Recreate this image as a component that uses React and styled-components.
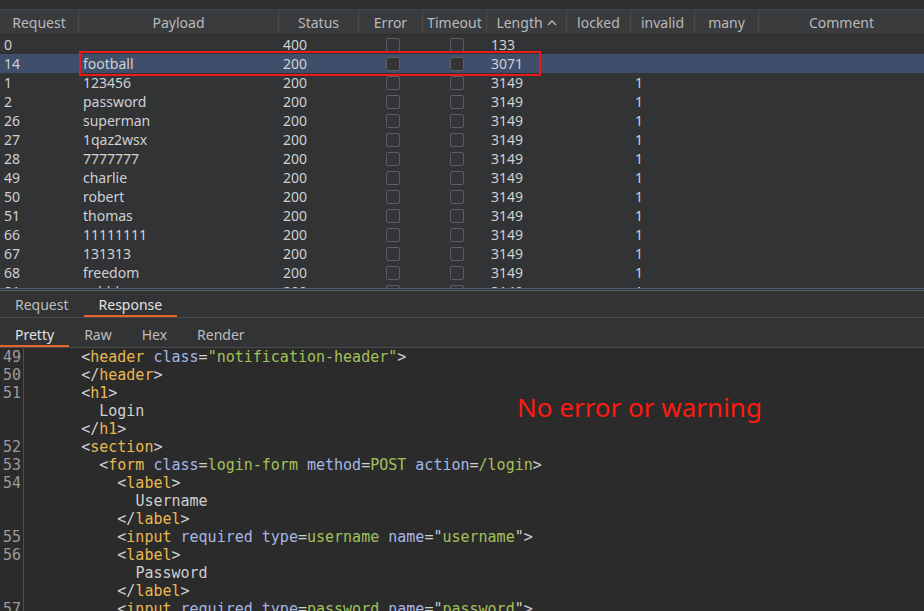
import React from 'react';
import styled, { createGlobalStyle } from 'styled-components';

const GlobalStyle = createGlobalStyle`
    html, body {
        margin: 0;
        padding: 0;
        background: #2b2b2b;
        overflow: hidden;
    }
`;

const Page = styled.div`
    width: 924px;
    height: 611px;
    display: flex;
    flex-direction: column;
    overflow: hidden;
    position: relative;
    background: #2b2b2b;
    font-family: 'Noto Sans', 'Open Sans', sans-serif;
`;

const TopStrip = styled.div`
    height: 9px;
    flex: none;
    background: #2f3032;
    border-bottom: 1px solid #3e4552;
`;

const TablePane = styled.div`
    height: 278px;
    flex: none;
    overflow: hidden;
    background: #323335;
    border-bottom: 1px solid #4b5a7d;
`;

const COLS = '79px 200px 80px 64px 64px 80px 64px 64px 64px 1fr';

const HeaderRow = styled.div`
    display: grid;
    grid-template-columns: ${COLS};
    height: 25px;
    background: #3a3b3d;
    border-bottom: 1px solid #2a2b2d;
    box-sizing: border-box;
`;

const HeadCell = styled.div`
    display: flex;
    align-items: center;
    justify-content: center;
    gap: 4px;
    font-size: 14px;
    color: #b8b9bb;
    border-right: 1px solid #4b4c4e;
    &:last-child {
        border-right: none;
    }
`;

const Row = styled.div`
    display: grid;
    grid-template-columns: ${COLS};
    height: 19px;
    background: ${(p) => (p.$selected ? '#3f4e6a' : 'transparent')};
`;

const Cell = styled.div`
    display: flex;
    align-items: center;
    justify-content: ${(p) => (p.$center ? 'center' : 'flex-start')};
    padding-left: ${(p) => (p.$center ? '0' : '4px')};
    font-size: 14px;
    color: #cfd0d2;
    white-space: nowrap;
    overflow: hidden;
`;

const Check = styled.span`
    width: 12px;
    height: 12px;
    border: 1px solid #5c5d60;
    border-radius: 2px;
    background: ${(p) => (p.$selected ? '#333436' : '#343538')};
    margin-left: 3px;
`;

const Gap = styled.div`
    height: 1px;
    flex: none;
    background: #303133;
`;

const TabBar = styled.div`
    display: flex;
    flex: none;
    height: ${(p) => p.$h}px;
    padding-top: ${(p) => p.$pad || 0}px;
    background: #323335;
    border-top: ${(p) => (p.$top ? '1px solid #5a5b5d' : 'none')};
    border-bottom: 1px solid #4a4b4d;
    box-sizing: border-box;
`;

const Tab = styled.div`
    padding: 0 15px;
    display: flex;
    align-items: center;
    font-size: 14px;
    color: ${(p) => (p.$active ? '#e2e2e2' : '#bdbdbf')};
    box-shadow: ${(p) => (p.$active ? 'inset 0 -2px 0 #e5662c' : 'none')};
`;

const Code = styled.div`
    flex: 1;
    display: flex;
    flex-direction: column;
    background: #2b2b2b;
    font-family: 'DejaVu Sans Mono', monospace;
    font-size: 15px;
    overflow: hidden;
`;

const Line = styled.div`
    display: flex;
    height: 18px;
    line-height: 18px;
    flex: none;
`;

const Gutter = styled.div`
    width: 20px;
    padding-left: 3px;
    border-right: 1px solid #4d4e50;
    color: #9a9b9d;
    flex: none;
`;

const Src = styled.div`
    padding-left: 3px;
    white-space: pre;
    color: #cfcfcf;
`;

const Tag = styled.span`
    color: #e9b850;
`;
const Attr = styled.span`
    color: #a7b6e4;
`;
const Val = styled.span`
    color: #a3c15a;
`;

const Highlight = styled.div`
    position: absolute;
    left: 79px;
    top: 51px;
    width: 462px;
    height: 25px;
    box-sizing: border-box;
    border: 2px solid #ea1a1a;
`;

const Note = styled.div`
    position: absolute;
    left: 517px;
    top: 389px;
    font-family: 'Noto Sans', 'Open Sans', sans-serif;
    font-size: 26px;
    color: #ff1a0f;
`;

const heads = ['Request', 'Payload', 'Status', 'Error', 'Timeout', 'Length', 'locked', 'invalid', 'many', 'Comment'];

const rows = [
    ['0', '', '400', '133', ''],
    ['14', 'football', '200', '3071', '', true],
    ['1', '123456', '200', '3149', '1'],
    ['2', 'password', '200', '3149', '1'],
    ['26', 'superman', '200', '3149', '1'],
    ['27', '1qaz2wsx', '200', '3149', '1'],
    ['28', '7777777', '200', '3149', '1'],
    ['49', 'charlie', '200', '3149', '1'],
    ['50', 'robert', '200', '3149', '1'],
    ['51', 'thomas', '200', '3149', '1'],
    ['66', '11111111', '200', '3149', '1'],
    ['67', '131313', '200', '3149', '1'],
    ['68', 'freedom', '200', '3149', '1'],
    ['81', 'cobbler', '200', '3149', '1'],
];

const Open = ({ name, children }) => (
    <>
        {'<'}
        <Tag>{name}</Tag>
        {children}
        {'>'}
    </>
);

const Close = ({ name }) => (
    <>
        {'</'}
        <Tag>{name}</Tag>
        {'>'}
    </>
);

const lines = [
    ['49', 6, <Open name="header"> <Attr>class</Attr>=<Val>"notification-header"</Val></Open>],
    ['50', 6, <Close name="header" />],
    ['51', 6, <Open name="h1" />],
    ['', 8, 'Login'],
    ['', 6, <Close name="h1" />],
    ['52', 6, <Open name="section" />],
    ['53', 8, <Open name="form"> <Attr>class</Attr>=<Val>login-form</Val> <Attr>method</Attr>=<Val>POST</Val> <Attr>action</Attr>=<Val>/login</Val></Open>],
    ['54', 10, <Open name="label" />],
    ['', 12, 'Username'],
    ['', 10, <Close name="label" />],
    ['55', 10, <Open name="input"> <Attr>required</Attr> <Attr>type</Attr>=<Val>username</Val> <Attr>name</Attr>="<Val>username</Val>"</Open>],
    ['56', 10, <Open name="label" />],
    ['', 12, 'Password'],
    ['', 10, <Close name="label" />],
    ['57', 10, <Open name="input"> <Attr>required</Attr> <Attr>type</Attr>=<Val>password</Val> <Attr>name</Attr>="<Val>password</Val>"</Open>],
];

const SortIcon = () => (
    <svg width="10" height="7" viewBox="0 0 10 7" fill="none" stroke="#b8b9bb" strokeWidth="1.3">
        <path d="M1 6 L5 2 L9 6" />
    </svg>
);

const App = () => {
    return (
        <Page>
            <GlobalStyle />
            <TopStrip />
            <TablePane>
                <HeaderRow>
                    {heads.map((h) => (
                        <HeadCell key={h}>
                            {h}
                            {h === 'Length' && <SortIcon />}
                        </HeadCell>
                    ))}
                </HeaderRow>
                {rows.map(([req, payload, status, len, invalid, sel]) => (
                    <Row key={req} $selected={sel}>
                        <Cell>{req}</Cell>
                        <Cell>{payload}</Cell>
                        <Cell>{status}</Cell>
                        <Cell $center>
                            <Check $selected={sel} />
                        </Cell>
                        <Cell $center>
                            <Check $selected={sel} />
                        </Cell>
                        <Cell>{len}</Cell>
                        <Cell />
                        <Cell>{invalid}</Cell>
                        <Cell />
                        <Cell />
                    </Row>
                ))}
            </TablePane>
            <Gap />
            <TabBar $h={28} $top>
                <Tab>Request</Tab>
                <Tab $active>Response</Tab>
            </TabBar>
            <TabBar $h={30} $pad={4}>
                <Tab $active>Pretty</Tab>
                <Tab>Raw</Tab>
                <Tab>Hex</Tab>
                <Tab>Render</Tab>
            </TabBar>
            <Code>
                {lines.map(([num, indent, content], i) => (
                    <Line key={i}>
                        <Gutter>{num}</Gutter>
                        <Src>
                            {' '.repeat(indent)}
                            {content}
                        </Src>
                    </Line>
                ))}
            </Code>
            <Highlight />
            <Note>No error or warning</Note>
        </Page>
    );
};

export default App;
